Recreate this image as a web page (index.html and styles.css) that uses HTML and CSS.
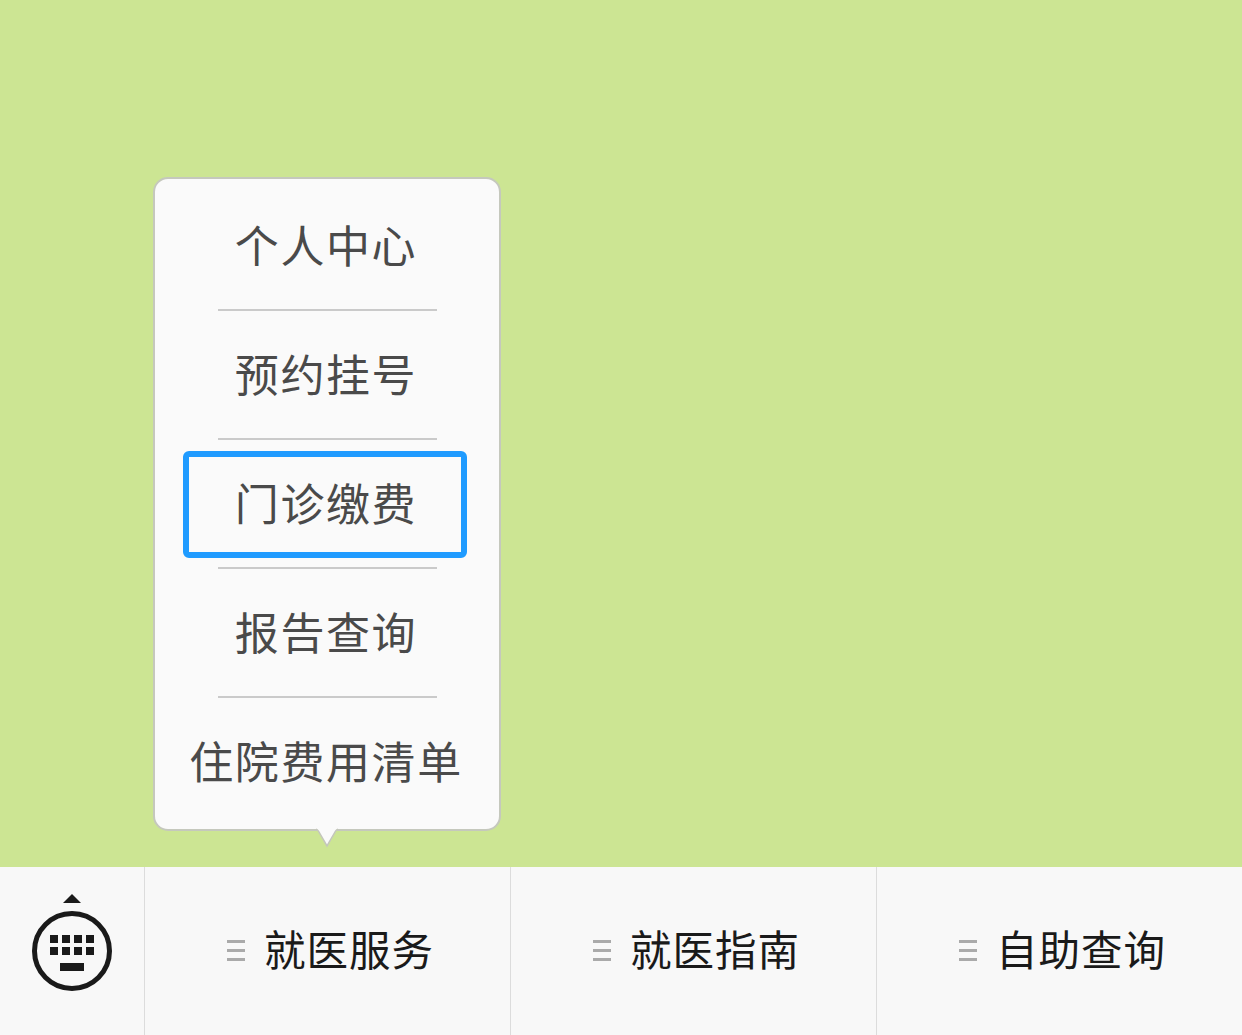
FILE: index.html
```html
<!DOCTYPE html>
<html lang="zh-CN">
<head>
<meta charset="utf-8">
<title>就医服务</title>
<link rel="stylesheet" href="styles.css">
</head>
<body>
<main class="chat"></main>
<nav class="bar">
  <button class="keyboard" aria-label="键盘">
    <svg width="80" height="98" viewBox="0 0 80 98">
      <path d="M31 9 40 0l9 9z" fill="#1a1a1a"/>
      <circle cx="40" cy="57" r="37.5" fill="none" stroke="#1a1a1a" stroke-width="5"/>
      <path d="M18 41h8v8h-8zM30 41h8v8h-8zM42 41h8v8h-8zM54 41h8v8h-8zM18 53h8v8h-8zM30 53h8v8h-8zM42 53h8v8h-8zM54 53h8v8h-8zM28 69h24v8H28z" fill="#1a1a1a"/>
    </svg>
  </button>
  <div class="tab">
    <span class="lines"></span><span class="label">就医服务</span>
    <div class="popover">
      <ul class="menu">
        <li class="item">个人中心</li>
        <li class="item">预约挂号</li>
        <li class="item selected">门诊缴费</li>
        <li class="item">报告查询</li>
        <li class="item">住院费用清单</li>
      </ul>
      <svg class="arrow" width="24" height="20" viewBox="0 0 24 20">
        <path d="M1 0v1.5L3 3l9 15.5L21 3l2-1.500V0z" fill="#fafafa"/>
        <path d="M1 1.300Q2.500 1.500 3.300 3L12 18 20.700 3Q21.500 1.500 23 1.300" fill="none" stroke="#c3c6ba" stroke-width="1.500"/>
      </svg>
    </div>
  </div>
  <div class="tab"><span class="lines"></span><span class="label">就医指南</span></div>
  <div class="tab"><span class="lines"></span><span class="label">自助查询</span></div>
</nav>
</body>
</html>
```
FILE: styles.css
```css
*, *::before, *::after { box-sizing: border-box; }
body {
  margin: 0;
  height: 1035px;
  display: flex;
  flex-direction: column;
  overflow: hidden;
  background: #cce593;
  font-family: "Noto Sans CJK SC", sans-serif;
}
.chat { flex: 1; }
.bar {
  height: 168px;
  display: flex;
  background: #f8f8f8;
}
.keyboard {
  width: 144px;
  padding: 27px 0 0;
  border: 0;
  background: none;
  display: flex;
  justify-content: center;
  align-items: flex-start;
}
.tab {
  position: relative;
  width: 366px;
  padding: 0 0 2px 82px;
  border-left: 1px solid #dcdcdc;
  display: flex;
  align-items: center;
  gap: 19px;
}
.lines {
  width: 18px;
  height: 21px;
  border-top: 3px solid #aaa;
  border-bottom: 3px solid #aaa;
  background: linear-gradient(#aaa, #aaa) center / 100% 3px no-repeat;
}
.label {
  padding-bottom: 4px;
  font-size: 41.500px;
  letter-spacing: 1px;
  line-height: 60px;
  color: #1a1a1a;
  white-space: nowrap;
}
.popover {
  position: absolute;
  left: 8px;
  bottom: 204px;
  width: 348px;
  height: 654px;
  padding: 2px 0;
  border: 2px solid #c5c8bd;
  border-radius: 15px;
  background: #fafafa;
}
.menu {
  margin: 0;
  padding: 0;
  list-style: none;
}
.item {
  position: relative;
  height: 129px;
  padding: 0 2px 4px 0;
  display: flex;
  align-items: center;
  justify-content: center;
  font-size: 44px;
  letter-spacing: 1.600px;
  line-height: 66px;
  color: #4a4a4a;
  white-space: nowrap;
}
.item:not(:last-child)::after {
  content: "";
  position: absolute;
  left: 63px;
  right: 62px;
  bottom: -1px;
  height: 2px;
  background: #cacaca;
}
.selected::before {
  content: "";
  position: absolute;
  left: 28px;
  top: 12px;
  width: 284px;
  height: 107px;
  border: 6px solid #1f9bff;
  border-radius: 6px;
}
.arrow {
  position: absolute;
  left: 160px;
  top: 649px;
}
```
